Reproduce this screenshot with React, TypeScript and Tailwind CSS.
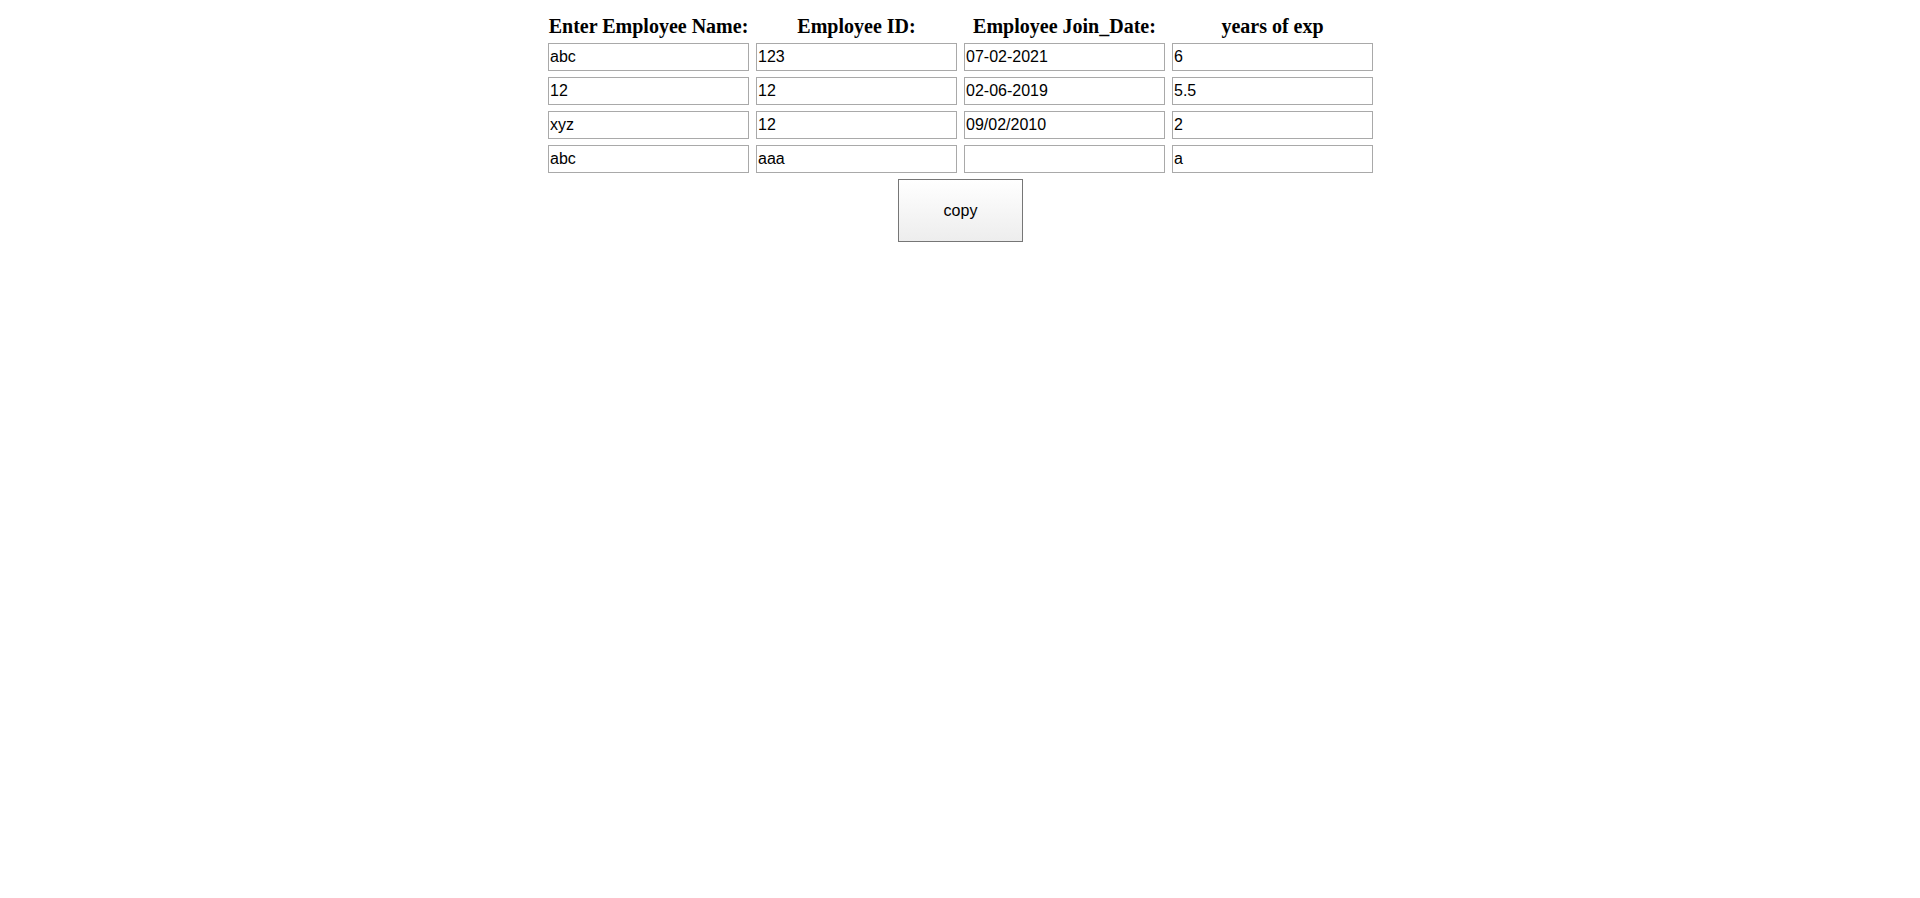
import { useState } from "react";

const headers = ["Enter Employee Name:", "Employee ID:", "Employee Join_Date:", "years of exp"];

const initialRows = [
  ["abc", "123", "07-02-2021", "6"],
  ["12", "12", "02-06-2019", "5.5"],
  ["xyz", "12", "09/02/2010", "2"],
  ["abc", "aaa", "", "a"],
];

export default function App() {
  const [rows, setRows] = useState(initialRows);

  const update = (r: number, c: number, value: string) => {
    setRows((prev) => prev.map((row, i) => (i === r ? row.map((v, j) => (j === c ? value : v)) : row)));
  };

  return (
    <div className="min-h-screen bg-white pl-[1px] pt-[15px] flex justify-center">
      <div className="flex flex-col items-center">
        <div className="grid grid-cols-[repeat(4,201px)] gap-x-[7px] mb-[5px]">
          {headers.map((h) => (
            <div
              key={h}
              className="text-center font-bold text-[20px] leading-[23px] text-black whitespace-nowrap font-['Liberation_Serif','Times_New_Roman',serif]"
            >
              {h}
            </div>
          ))}
        </div>

        <div className="grid grid-cols-[repeat(4,201px)] gap-x-[7px] gap-y-[6px]">
          {rows.map((row, r) =>
            row.map((value, c) => (
              <input
                key={`${r}-${c}`}
                type="text"
                value={value}
                onChange={(e) => update(r, c, e.target.value)}
                className="w-[201px] h-[28px] border border-[#a9a9a9] bg-white px-[1px] text-[16px] text-black outline-none font-['Liberation_Sans',Arial,sans-serif]"
              />
            )),
          )}
        </div>

        <button
          type="button"
          className="mt-[6px] w-[125px] h-[63px] border border-[#767676] bg-gradient-to-b from-white to-[#ededed] text-[16px] text-black cursor-pointer font-['Liberation_Sans',Arial,sans-serif]"
        >
          copy
        </button>
      </div>
    </div>
  );
}
